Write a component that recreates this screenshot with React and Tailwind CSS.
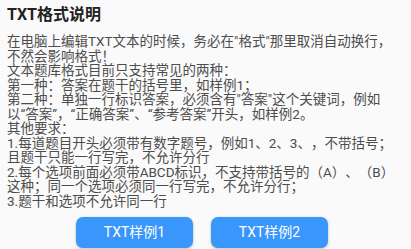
const lines = [
  '在电脑上编辑TXT文本的时候，务必在"格式"那里取消自动换行，',
  '不然会影响格式！',
  '文本题库格式目前只支持常见的两种：',
  '第一种：答案在题干的括号里，如样例1；',
  '第二种：单独一行标识答案，必须含有"答案"这个关键词，例如',
  '以“答案”，“正确答案”、“参考答案”开头，如样例2。',
  '其他要求：',
  '1.每道题目开头必须带有数字题号，例如1、2、3、，不带括号；',
  '且题干只能一行写完，不允许分行',
  '2.每个选项前面必须带ABCD标识，不支持带括号的（A）、（B）',
  '这种；同一个选项必须同一行写完，不允许分行；',
  '3.题干和选项不允许同一行',
];

export default function App() {
  return (
    <div
      className="w-[411px] h-[249px] bg-[#fafafa] overflow-hidden px-[7px] pt-[5px] [text-spacing-trim:space-all]"
      style={{ fontFamily: "Roboto, 'Noto Sans CJK SC', sans-serif" }}
    >
      <h1 className="text-[16px] leading-[20px] font-bold text-[#222]">TXT格式说明</h1>
      <div className="mt-[9px] text-[13.5px] leading-[14.5px] text-[#4d4d4d] whitespace-nowrap">
        {lines.map((line) => (
          <p key={line}>{line}</p>
        ))}
      </div>
      <div className="flex justify-center gap-[18px] mt-[9px] pr-[7px]">
        <button className="w-[117px] h-[31px] rounded-[7px] bg-[#3996fb] text-white text-[14px] shadow-[0_1px_3px_rgba(0,0,0,0.25)]">
          TXT样例1
        </button>
        <button className="w-[117px] h-[31px] rounded-[7px] bg-[#3996fb] text-white text-[14px] shadow-[0_1px_3px_rgba(0,0,0,0.25)]">
          TXT样例2
        </button>
      </div>
    </div>
  );
}
